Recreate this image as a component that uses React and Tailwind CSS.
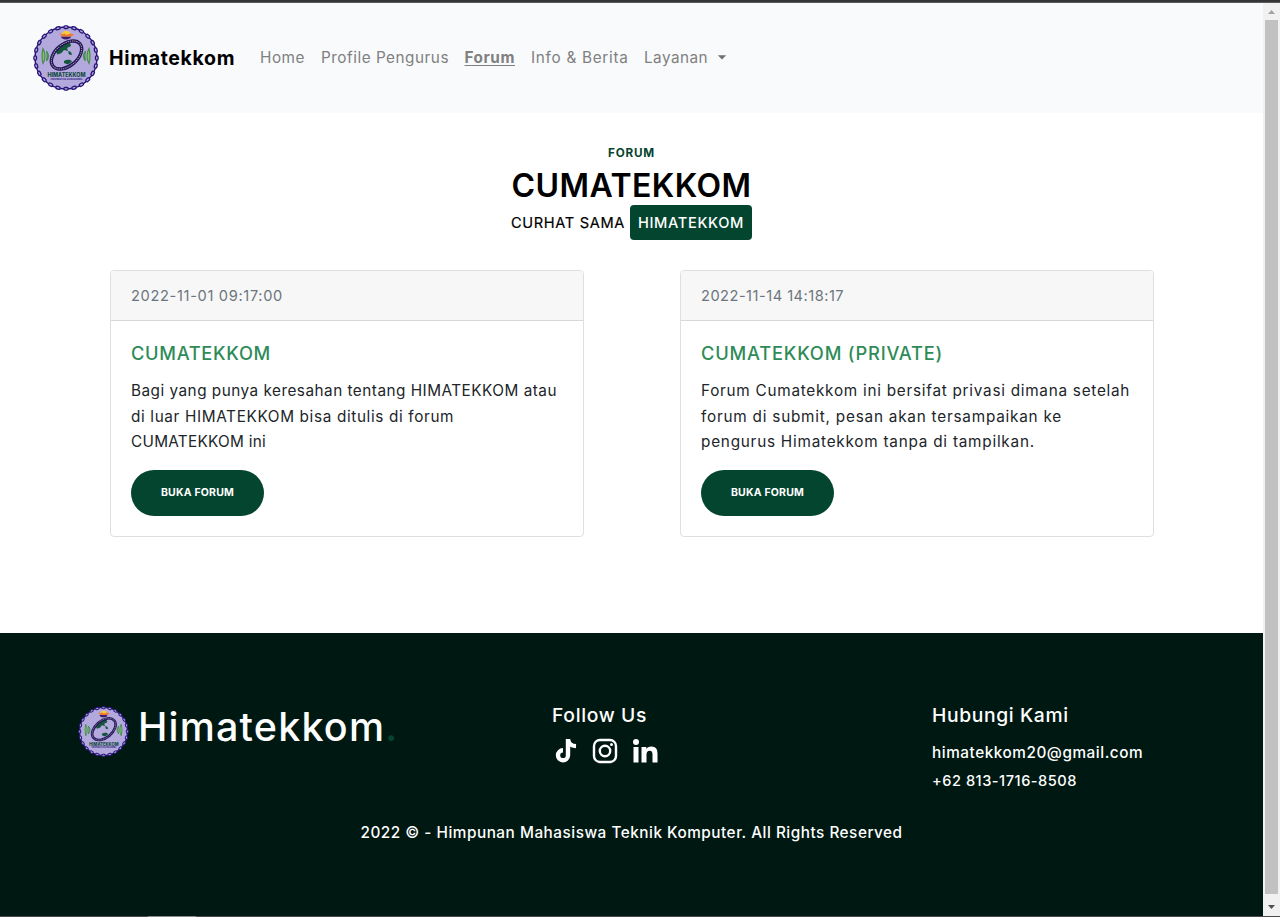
const CHAIN = Array.from({ length: 24 }, (_, i) => i * 15);

function Logo({ className }) {
  return (
    <svg viewBox="0 0 66 66" className={className}>
      <circle cx="33" cy="33" r="31" fill="#b3a9dc" />
      <circle cx="33" cy="33" r="31" fill="none" stroke="#29157a" strokeWidth="1.4" />
      {CHAIN.map((a) => (
        <rect key={a} x="30.9" y="0.9" width="4.2" height="2.6" rx="1.1" fill="#b9b2dd" stroke="#29157a" strokeWidth="1.3" transform={`rotate(${a} 33 33)`} />
      ))}
      <path d="M28 11.500a5 3 0 0 0 10 0z" fill="#3a1f6d" />
      <path d="M29 8.500a4.500 4 0 0 1 8.500 0l-1 2h-6z" fill="#f6c945" />
      <path d="M26 7l2.500 2.500 3-1 2 1.500 3.500-1.500 4 1-3 2H28.500z" fill="#f0782c" />
      <ellipse cx="33.500" cy="30" rx="17" ry="10.500" transform="rotate(-40 33.500 30)" fill="#b3a9dc" />
      <path d="M23 27c2-6 7-9 14-9.500l1 3.500-4 2 1 3-4-1-2.500 3-4 1.500zM31 36c3-2 7-1.500 8 .5l-4 3-4-1.500zM35 26l3 1 1 3-3-.5z" fill="#14563c" />
      <ellipse cx="33.500" cy="30" rx="17.500" ry="11" transform="rotate(-40 33.500 30)" fill="none" stroke="#211263" strokeWidth="3.400" />
      <ellipse cx="33.500" cy="30" rx="17.500" ry="11" transform="rotate(-40 33.500 30)" fill="none" stroke="#aaa47a" strokeWidth="1" strokeDasharray="1.300 .9" />
      <g fill="#86bd6b" stroke="#418c4b" strokeWidth="1.100">
        <path d="M10 23.500q4 7.500 0 15q-2-7.500 0-15zM13.500 26q4 5 0 10q1.500-5 0-10zM56 23.500q-4 7.500 0 15q2-7.500 0-15zM52.500 26q-4 5 0 10q-1.500-5 0-10z" />
      </g>
      <text x="33.500" y="51.600" textAnchor="middle" textLength="38" lengthAdjust="spacingAndGlyphs" fontFamily="Inter, sans-serif" fontWeight="800" fontSize="6" fill="#134b45">HIMATEKKOM</text>
      <text x="33.500" y="54.800" textAnchor="middle" textLength="32" lengthAdjust="spacingAndGlyphs" fontFamily="Inter, sans-serif" fontWeight="700" fontSize="2.600" fill="#29157a">UNIVERSITAS GUNADARMA</text>
    </svg>
  );
}

function Card({ date, title, lines }) {
  return (
    <article className="flex h-[267px] w-[474px] flex-col rounded border border-[#dfdfdf] bg-white">
      <div className="flex h-[50px] items-center rounded-t border-b border-[#d8d8d8] bg-[#f7f7f7] px-5 pt-0.5 text-[14.6px] text-[#6c757d]">
        {date}
      </div>
      <div className="flex flex-col items-start px-5 pt-5">
        <h2 className="h-6 text-[18.3px] leading-6 font-medium whitespace-nowrap text-[#2e8b57]">{title}</h2>
        <p className="mt-[13px] text-[15.3px] leading-[25.6px] text-[#212529]">{lines}</p>
        <a className="mt-[15px] flex h-[46px] w-[133px] items-center justify-center rounded-full bg-[#04452f] text-[10.5px] font-bold tracking-[0.19px] text-white">
          <span>BUKA FORUM</span>
        </a>
      </div>
    </article>
  );
}

function Line({ className, children }) {
  return <span className={`block w-fit whitespace-nowrap ${className}`}>{children}</span>;
}

function TikTok() {
  return (
    <svg viewBox="0 0 24 26" className="h-[26px] w-6" fill="none" stroke="#fff">
      <path d="M14 1v16.500a5 5 0 1 1-5-5.200" strokeWidth="4.400" />
      <path d="M14 1.500c.5 4 3.500 6.500 8 6.700" strokeWidth="4.200" />
    </svg>
  );
}

function Instagram() {
  return (
    <svg viewBox="0 0 26 26" className="size-[26px]" fill="none" stroke="#fff">
      <rect x="2" y="2" width="22" height="22" rx="6" strokeWidth="2.400" />
      <circle cx="13" cy="13" r="5.200" strokeWidth="2.400" />
      <circle cx="19.500" cy="6.500" r="1.500" fill="#fff" stroke="none" />
    </svg>
  );
}

function LinkedIn() {
  return (
    <svg viewBox="0 0 26 26" className="size-[26px]" fill="#fff">
      <circle cx="4" cy="4" r="3" />
      <path d="M1.500 9h5v15.500h-5zM9.500 9h4.800v2.100c.8-1.500 2.500-2.500 5-2.500 4.800 0 6.200 3 6.200 7.300v8.600h-5v-7.700c0-2.200-.4-4-2.800-4-2.500 0-3.200 1.700-3.200 4v7.700h-5z" />
    </svg>
  );
}

export default function App() {
  return (
    <div className="flex h-[917px] w-[1280px] flex-col overflow-hidden bg-white font-['Inter',sans-serif]">
      <div className="h-[3px] shrink-0 border-b border-[#5c5c5c] bg-[#353535]" />
      <div className="flex h-[913px] shrink-0">
        <div className="flex w-[1263px] flex-col">
          <nav className="flex h-[110px] items-center bg-[#f8fafc] pl-[33px] text-[15.3px] whitespace-nowrap text-[#808080]">
            <Logo className="size-[66px]" />
            <b className="mt-0.5 ml-[10px] w-[127px] text-[19.5px] tracking-[0.67px] text-black">Himatekkom</b>
            <div className="mt-px ml-6 flex items-center gap-4">
              <span className="w-[45px] tracking-[0.54px]">Home</span>
              <span className="w-[127.5px] tracking-[0.52px]">Profile Pengurus</span>
              <b className="w-[50.5px] tracking-[0.57px] underline underline-offset-2">Forum</b>
              <span className="w-[97px] tracking-[0.71px]">Info &amp; Berita</span>
              <span className="w-[57px] tracking-[0.46px]">Layanan</span>
              <svg viewBox="0 0 10 5" className="-mt-0.5 h-[5px] w-2.5" fill="#707070"><path d="M.8.300h8.400L5 4.600z" /></svg>
            </div>
          </nav>
          <header className="flex flex-col items-center pt-[31px]">
            <p className="text-[11.7px] leading-[18px] font-bold tracking-[0.8px] text-[#04452f]">FORUM</p>
            <h1 className="mt-0.5 text-[32px] leading-[44px] font-semibold tracking-[0.45px]">CUMATEKKOM</h1>
            <p className="-mt-[3px] flex items-center text-[14.6px] font-medium">
              <span className="mt-0.5 w-[119px] font-normal tracking-[0.65px] [-webkit-text-stroke:0.2px_black]">CURHAT SAMA</span>
              <span className="flex h-[35px] w-[122px] items-center justify-center rounded bg-[#04452f] pt-0.5 tracking-[0.64px] text-white">HIMATEKKOM</span>
            </p>
          </header>
          <main className="mt-[30px] flex gap-24 pl-[110px]">
            <Card
              date={<span className="tracking-[0.67px]">2022-11-01 09:17:00</span>}
              title={<span className="tracking-[0.68px]">CUMATEKKOM</span>}
              lines={<>
                <Line className="tracking-[0.5px]">Bagi yang punya keresahan tentang HIMATEKKOM atau</Line>
                <Line className="tracking-[0.65px]">di luar HIMATEKKOM bisa ditulis di forum</Line>
                <Line className="tracking-[0.29px]">CUMATEKKOM ini</Line>
              </>}
            />
            <Card
              date={<span className="tracking-[0.5px]">2022-11-14 14:18:17</span>}
              title={<span className="tracking-[0.8px]">CUMATEKKOM (PRIVATE)</span>}
              lines={<>
                <Line className="tracking-[0.74px]">Forum Cumatekkom ini bersifat privasi dimana setelah</Line>
                <Line className="tracking-[0.78px]">forum di submit, pesan akan tersampaikan ke</Line>
                <Line className="tracking-[0.77px]">pengurus Himatekkom tanpa di tampilkan.</Line>
              </>}
            />
          </main>
          <footer className="mt-24 flex grow flex-col bg-[#001812] pt-[70px] whitespace-nowrap text-white">
            <div className="flex h-[110px] items-start">
              <div className="flex w-[552px] items-start pl-[78px]">
                <Logo className="mt-[3px] size-[51px]" />
                <p className="ml-[9px] text-[39.5px] leading-[48px] font-medium tracking-[1.18px]">
                  Himatekkom<span className="text-[#04452f]">.</span>
                </p>
              </div>
              <div className="w-[380px]">
                <h3 className="text-[19.3px] leading-6 font-medium tracking-[0.66px]">Follow Us</h3>
                <div className="mt-[11px] flex items-center gap-[14px] pl-[2px]">
                  <TikTok />
                  <Instagram />
                  <LinkedIn />
                </div>
              </div>
              <div className="text-[15.3px] leading-7">
                <h3 className="text-[19.3px] leading-6 font-medium tracking-[0.62px]">Hubungi Kami</h3>
                <p className="mt-3 font-medium tracking-[0.55px]">himatekkom20@gmail.com</p>
                <p className="text-[14.6px] font-medium tracking-[0.52px]">+62 813-1716-8508</p>
              </div>
            </div>
            <p className="mt-2 text-center text-[15.3px] leading-6 font-medium tracking-[0.52px]">
              2022 © - Himpunan Mahasiswa Teknik Komputer. All Rights Reserved
            </p>
          </footer>
        </div>
        <div className="flex w-[17px] flex-col items-center bg-[#f1f1f1]">
          <div className="flex h-[17px] items-center"><svg viewBox="0 0 7 4" className="h-1 w-[7px]" fill="#a3a3a3"><path d="M3.500 0L7 4H0z" /></svg></div>
          <div className="w-[13px] grow bg-[#c1c1c1]" />
          <div className="flex h-[22px] items-center pt-1"><svg viewBox="0 0 7 4" className="h-1 w-[7px]" fill="#505050"><path d="M3.500 4L7 0H0z" /></svg></div>
        </div>
      </div>
      <div className="flex h-px shrink-0 bg-[#4a4a4a] pl-[148px]"><div className="h-px w-12 bg-[#8a8a8a]" /></div>
    </div>
  );
}
